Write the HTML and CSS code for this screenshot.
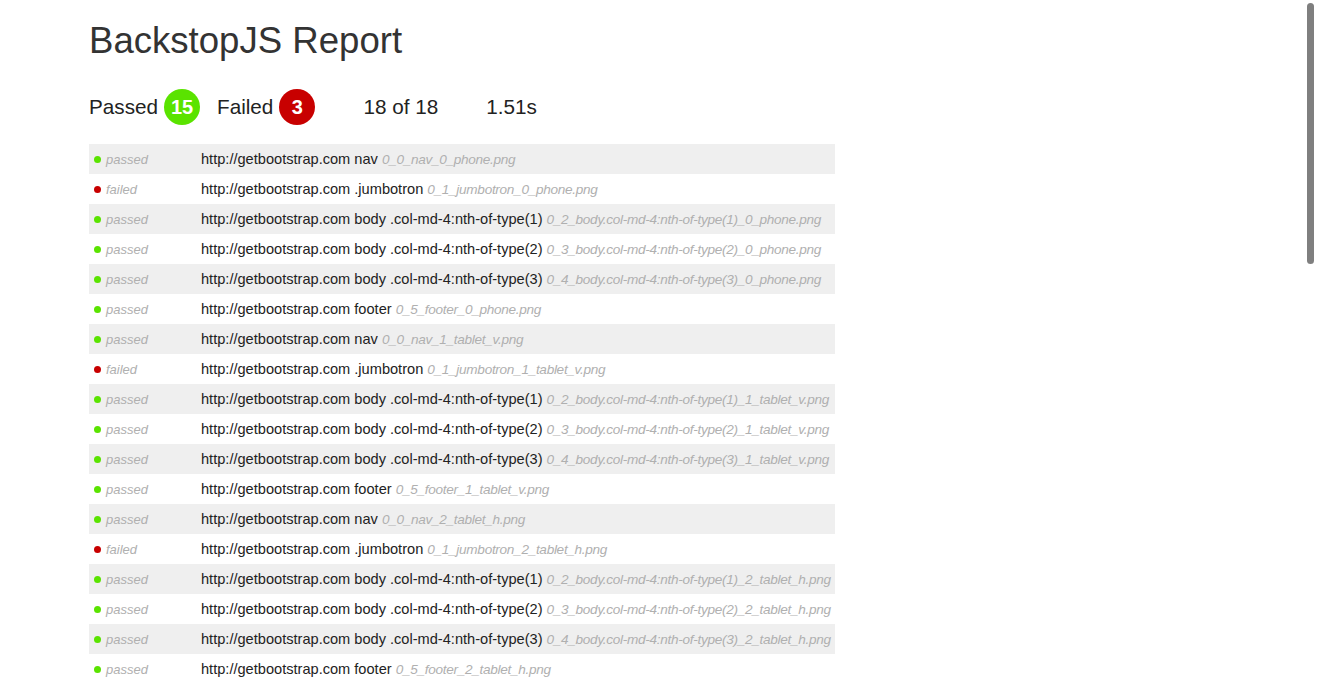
FILE: index.html
```html
<!DOCTYPE html>
<html lang="en">
<head>
    <meta charset="UTF-8">
    <title>BackstopJS Report</title>
    <link rel="stylesheet" href="styles.css">
</head>
<body>
    <div class="report">
        <h1>BackstopJS Report</h1>
        <div class="summary">
            <span class="stat">Passed <span class="badge badge-pass">15</span></span>
            <span class="stat">Failed <span class="badge badge-fail">3</span></span>
            <span class="stat stat-count">18 of 18</span>
            <span class="stat">1.51s</span>
        </div>
        <table class="results">
            <tr><td class="status"><span class="dot pass"></span>passed</td><td>http://getbootstrap.com nav <span class="file">0_0_nav_0_phone.png</span></td></tr>
            <tr><td class="status"><span class="dot fail"></span>failed</td><td>http://getbootstrap.com .jumbotron <span class="file">0_1_jumbotron_0_phone.png</span></td></tr>
            <tr><td class="status"><span class="dot pass"></span>passed</td><td>http://getbootstrap.com body .col-md-4:nth-of-type(1) <span class="file">0_2_body.col-md-4:nth-of-type(1)_0_phone.png</span></td></tr>
            <tr><td class="status"><span class="dot pass"></span>passed</td><td>http://getbootstrap.com body .col-md-4:nth-of-type(2) <span class="file">0_3_body.col-md-4:nth-of-type(2)_0_phone.png</span></td></tr>
            <tr><td class="status"><span class="dot pass"></span>passed</td><td>http://getbootstrap.com body .col-md-4:nth-of-type(3) <span class="file">0_4_body.col-md-4:nth-of-type(3)_0_phone.png</span></td></tr>
            <tr><td class="status"><span class="dot pass"></span>passed</td><td>http://getbootstrap.com footer <span class="file">0_5_footer_0_phone.png</span></td></tr>
            <tr><td class="status"><span class="dot pass"></span>passed</td><td>http://getbootstrap.com nav <span class="file">0_0_nav_1_tablet_v.png</span></td></tr>
            <tr><td class="status"><span class="dot fail"></span>failed</td><td>http://getbootstrap.com .jumbotron <span class="file">0_1_jumbotron_1_tablet_v.png</span></td></tr>
            <tr><td class="status"><span class="dot pass"></span>passed</td><td>http://getbootstrap.com body .col-md-4:nth-of-type(1) <span class="file">0_2_body.col-md-4:nth-of-type(1)_1_tablet_v.png</span></td></tr>
            <tr><td class="status"><span class="dot pass"></span>passed</td><td>http://getbootstrap.com body .col-md-4:nth-of-type(2) <span class="file">0_3_body.col-md-4:nth-of-type(2)_1_tablet_v.png</span></td></tr>
            <tr><td class="status"><span class="dot pass"></span>passed</td><td>http://getbootstrap.com body .col-md-4:nth-of-type(3) <span class="file">0_4_body.col-md-4:nth-of-type(3)_1_tablet_v.png</span></td></tr>
            <tr><td class="status"><span class="dot pass"></span>passed</td><td>http://getbootstrap.com footer <span class="file">0_5_footer_1_tablet_v.png</span></td></tr>
            <tr><td class="status"><span class="dot pass"></span>passed</td><td>http://getbootstrap.com nav <span class="file">0_0_nav_2_tablet_h.png</span></td></tr>
            <tr><td class="status"><span class="dot fail"></span>failed</td><td>http://getbootstrap.com .jumbotron <span class="file">0_1_jumbotron_2_tablet_h.png</span></td></tr>
            <tr><td class="status"><span class="dot pass"></span>passed</td><td>http://getbootstrap.com body .col-md-4:nth-of-type(1) <span class="file">0_2_body.col-md-4:nth-of-type(1)_2_tablet_h.png</span></td></tr>
            <tr><td class="status"><span class="dot pass"></span>passed</td><td>http://getbootstrap.com body .col-md-4:nth-of-type(2) <span class="file">0_3_body.col-md-4:nth-of-type(2)_2_tablet_h.png</span></td></tr>
            <tr><td class="status"><span class="dot pass"></span>passed</td><td>http://getbootstrap.com body .col-md-4:nth-of-type(3) <span class="file">0_4_body.col-md-4:nth-of-type(3)_2_tablet_h.png</span></td></tr>
            <tr><td class="status"><span class="dot pass"></span>passed</td><td>http://getbootstrap.com footer <span class="file">0_5_footer_2_tablet_h.png</span></td></tr>
        </table>
    </div>
    <div class="scroll-thumb"></div>
</body>
</html>
```

FILE: styles.css
```css
html {
    overflow: hidden;
}
body {
    font-family: "Liberation Sans", Arial, Helvetica, sans-serif;
    background-color: #fff;
    color: #222;
    margin: 0;
}
.report {
    padding: 21px 0 0 89px;
}
h1 {
    font-size: 36.6px;
    line-height: 40px;
    font-weight: normal;
    color: #333;
    margin: 0;
}
.summary {
    display: flex;
    align-items: center;
    height: 36px;
    margin-top: 28px;
    font-size: 20.7px;
    color: #222;
}
.stat {
    display: flex;
    align-items: center;
    margin-right: 17px;
}
.stat-count {
    margin-left: 31px;
    margin-right: 48px;
}
.badge {
    display: inline-flex;
    align-items: center;
    justify-content: center;
    width: 36px;
    height: 36px;
    border-radius: 50%;
    margin-left: 6px;
    color: #fff;
    font-weight: bold;
    font-size: 20px;
}
.badge-pass {
    background-color: #5ae300;
}
.badge-fail {
    background-color: #c80000;
}
.results {
    border-collapse: collapse;
    table-layout: fixed;
    width: 746px;
    margin-top: 19px;
    font-size: 14.6px;
}
.results tr:nth-child(odd) {
    background-color: #efefef;
}
.results td {
    height: 30px;
    padding: 0;
    white-space: nowrap;
}
.results td.status {
    width: 112px;
    color: #b0b0b0;
    font-size: 13px;
    font-style: italic;
}
.dot {
    display: inline-block;
    width: 7px;
    height: 7px;
    border-radius: 50%;
    margin: 0 5px 1px 5px;
    vertical-align: middle;
}
.dot.pass {
    background-color: #5ae300;
}
.dot.fail {
    background-color: #c80000;
}
.file {
    color: #b0b0b0;
    font-size: 13.6px;
    letter-spacing: -0.3px;
    font-style: italic;
}
.scroll-thumb {
    position: fixed;
    top: 3px;
    right: 3px;
    width: 7px;
    height: 261px;
    border-radius: 4px;
    background-color: #7f7f7f;
}
```
